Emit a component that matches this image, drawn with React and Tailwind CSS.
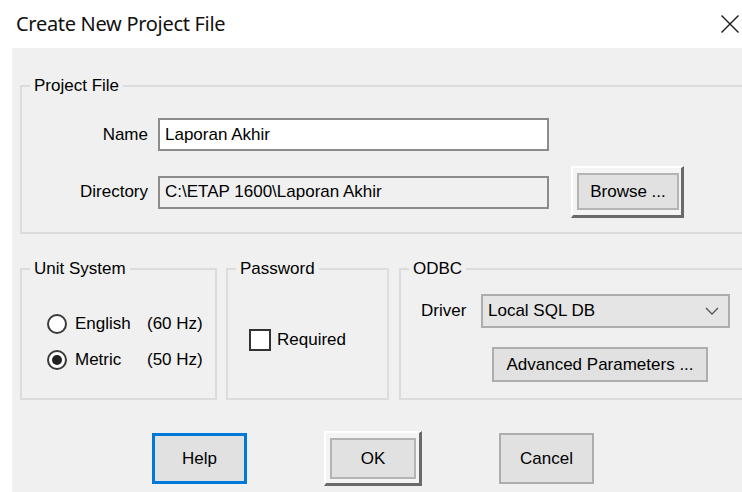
export default function App() {
  return (
    <div className="w-[742px] h-[492px] bg-white flex flex-col overflow-hidden text-black font-['Liberation_Sans',Arial,sans-serif] text-[17px]">
      {/* Title bar */}
      <div className="h-[48px] shrink-0 flex items-center justify-between pl-[16px] pr-[1px]">
        <span className="font-['Noto_Sans',sans-serif] text-[20px] leading-none text-[#111] tracking-[-0.3px]">Create New Project File</span>
        <svg width="22" height="22" viewBox="0 0 22 22">
          <path d="M2.5 2.5 L19.5 19.5 M19.5 2.5 L2.5 19.5" stroke="#1a1a1a" strokeWidth="1.4" fill="none" />
        </svg>
      </div>

      {/* Dialog body */}
      <div className="flex-1 ml-[12px] bg-[#f0f0f0] pl-[8px] pt-[28px] overflow-hidden">
        {/* Project File */}
        <fieldset className="w-[760px] border-2 border-[#dcdcdc]">
          <legend className="ml-[8px] px-[4px] leading-[20px]">Project File</legend>
          <div className="pt-[22px] pb-[14px]">
            <div className="flex items-center h-[33px]">
              <span className="w-[126px] text-right">Name</span>
              <div className="ml-[10px] w-[391px] h-[33px] border-2 border-[#8c8c8c] bg-white flex items-center pl-[5px]">
                Laporan Akhir
              </div>
            </div>
            <div className="flex items-center h-[52px] mt-[15px]">
              <span className="w-[126px] text-right">Directory</span>
              <div className="ml-[10px] w-[391px] h-[33px] border-2 border-[#8c8c8c] bg-[#f0f0f0] flex items-center pl-[5px]">
                C:\ETAP 1600\Laporan Akhir
              </div>
              <div className="ml-[22px] w-[113px] h-[52px] shrink-0 border-t-2 border-l-2 border-t-white border-l-white border-r-[3px] border-b-[3px] border-r-[#6a6a6a] border-b-[#6a6a6a] bg-[#f4f4f4] pt-[5px] pl-[4px] pr-[2px] pb-[5px]">
                <div className="w-full h-full border-2 border-[#b4b4b4] bg-[#e1e1e1] flex items-center justify-center">
                  Browse ...
                </div>
              </div>
            </div>
          </div>
        </fieldset>

        {/* Unit System / Password / ODBC */}
        <div className="flex mt-[25px]">
          <fieldset className="w-[197px] shrink-0 border-2 border-[#dcdcdc]">
            <legend className="ml-[8px] px-[4px] leading-[20px]">Unit System</legend>
            <div className="h-[119px] pl-[25px] pt-[33px]">
              <div className="flex items-center h-[24px]">
                <span className="w-[20px] h-[20px] rounded-full border-2 border-[#3a3a3a] bg-white" />
                <span className="ml-[8px] w-[72px]">English</span>
                <span>(60 Hz)</span>
              </div>
              <div className="flex items-center h-[24px] mt-[12px]">
                <span className="w-[20px] h-[20px] rounded-full border-2 border-[#3a3a3a] bg-white flex items-center justify-center">
                  <span className="w-[10px] h-[10px] rounded-full bg-[#222]" />
                </span>
                <span className="ml-[8px] w-[72px]">Metric</span>
                <span>(50 Hz)</span>
              </div>
            </div>
          </fieldset>

          <fieldset className="ml-[9px] w-[163px] shrink-0 border-2 border-[#dcdcdc]">
            <legend className="ml-[8px] px-[4px] leading-[20px]">Password</legend>
            <div className="h-[119px] pl-[21px] pt-[50px]">
              <div className="flex items-center h-[22px]">
                <span className="w-[22px] h-[22px] border-2 border-[#333] bg-white" />
                <span className="ml-[6px]">Required</span>
              </div>
            </div>
          </fieldset>

          <fieldset className="ml-[10px] w-[360px] shrink-0 border-2 border-[#dcdcdc]">
            <legend className="ml-[8px] px-[4px] leading-[20px]">ODBC</legend>
            <div className="h-[119px] pl-[20px] pt-[15px]">
              <div className="flex items-center h-[34px]">
                <span className="w-[47px]">Driver</span>
                <div className="ml-[13px] w-[249px] h-[34px] border-2 border-[#adadad] bg-[#e5e5e5] flex items-center justify-between pl-[5px] pr-[9px]">
                  <span>Local SQL DB</span>
                  <svg width="14" height="8" viewBox="0 0 14 8">
                    <path d="M1 1 L7 7 L13 1" stroke="#555" strokeWidth="1.3" fill="none" />
                  </svg>
                </div>
              </div>
              <div className="ml-[71px] mt-[19px] w-[216px] h-[35px] border-2 border-[#adadad] bg-[#e1e1e1] flex items-center justify-center">
                Advanced Parameters ...
              </div>
            </div>
          </fieldset>
        </div>

        {/* Dialog buttons */}
        <div className="flex items-center h-[55px] mt-[31px]">
          <div className="ml-[132px] w-[95px] h-[51px] border-[3px] border-[#0078d7] bg-[#e1e1e1] flex items-center justify-center">
            Help
          </div>
          <div className="ml-[77px] w-[98px] h-[55px] border-t-2 border-l-2 border-t-white border-l-white border-r-[3px] border-b-[3px] border-r-[#6a6a6a] border-b-[#6a6a6a] bg-[#f4f4f4] pt-[5px] pl-[4px] pr-[3px] pb-[4px]">
            <div className="w-full h-full border-2 border-[#b4b4b4] bg-[#e1e1e1] flex items-center justify-center">
              OK
            </div>
          </div>
          <div className="ml-[77px] w-[95px] h-[51px] border-2 border-[#adadad] bg-[#e1e1e1] flex items-center justify-center">
            Cancel
          </div>
        </div>
      </div>
    </div>
  );
}
